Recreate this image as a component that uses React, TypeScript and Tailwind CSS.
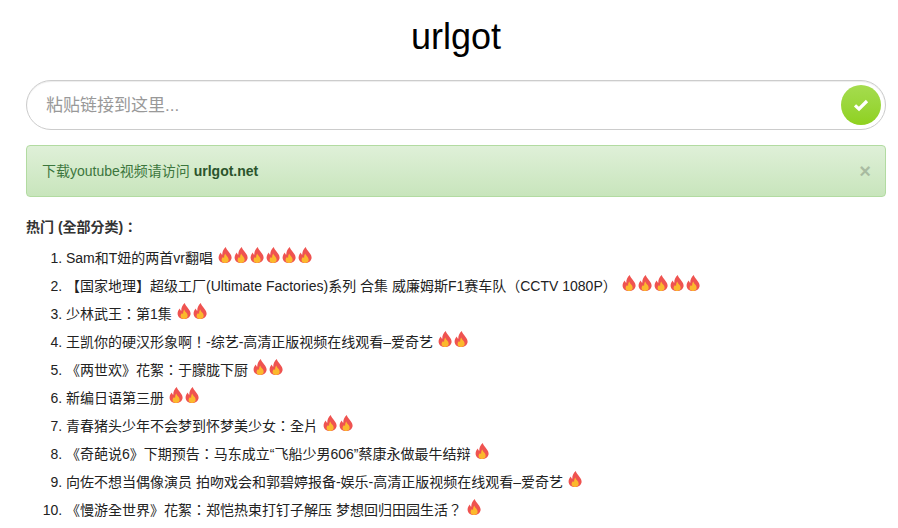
const FONT = "font-['Liberation_Sans','Noto_Sans_CJK_TC','Noto_Sans_CJK_SC',sans-serif]";

function Flame() {
  return (
    <svg viewBox="0 0 16 18" className="inline-block h-[18px] w-4 align-[-1px]">
      <path
        d="M8.8 1C9.2 3.2 10.8 4.6 12.2 6.4 13.8 8.4 14.7 10 14.6 12 14.3 15 11.5 17 8 17 4.5 17 1.8 15 1.6 11.9 1.5 9.6 2.6 7.9 3.9 6.5 4.1 7.7 4.5 8.4 5.3 8.8 5.1 5.8 6.5 2.8 8.8 1Z"
        fill="#ef5350"
      />
      <path
        d="M8.3 7.4C8.6 9 9.7 9.9 10.6 11.1 11.4 12.3 11.8 13.3 11.6 14.4 11.3 16 9.8 16.9 8 16.9 6.2 16.9 4.7 15.9 4.6 14.2 4.5 12.9 5.2 11.8 6.1 11 6.3 11.6 6.6 12 7.1 12.1 7 10.4 7.3 8.7 8.3 7.4Z"
        fill="#fbb92d"
      />
    </svg>
  );
}

const items: [string, number][] = [
  ["Sam和T妞的两首vr翻唱", 6],
  ["【国家地理】超级工厂(Ultimate Factories)系列 合集 威廉姆斯F1赛车队（CCTV 1080P）", 5],
  ["少林武王：第1集", 2],
  ["王凯你的硬汉形象啊！-综艺-高清正版视频在线观看–爱奇艺", 2],
  ["《两世欢》花絮：于朦胧下厨", 2],
  ["新编日语第三册", 2],
  ["青春猪头少年不会梦到怀梦美少女：全片", 2],
  ["《奇葩说6》下期预告：马东成立“飞船少男606”蔡康永做最牛结辩", 1],
  ["向佐不想当偶像演员 拍吻戏会和郭碧婷报备-娱乐-高清正版视频在线观看–爱奇艺", 1],
  ["《慢游全世界》花絮：郑恺热束打钉子解压 梦想回归田园生活？", 1],
];

export default function App() {
  return (
    <div className={`${FONT} h-[528px] w-[898px] overflow-hidden bg-white pr-[12px] pl-[26px] text-[14px] text-[#333]`}>
      <h1 className="pt-[15px] text-center text-[36px] leading-[44px] font-normal text-black">urlgot</h1>
      <div className="mt-[21px] flex h-[50px] items-center justify-between rounded-full border border-[#ccc] pr-[4px] pl-[19px] shadow-[inset_0_1px_1px_rgba(0,0,0,0.075)]">
        <span className="pt-[2px] text-[17px] text-[#999]">粘贴链接到这里...</span>
        <button className="flex h-10 w-10 items-center justify-center rounded-full bg-gradient-to-b from-[#a5dc4e] to-[#8fd11d]">
          <svg viewBox="0 0 20 16" className="h-[14px] w-[16px]">
            <path d="M2.5 8.5 7.5 13 17.5 3" fill="none" stroke="#fff" strokeWidth="4" />
          </svg>
        </button>
      </div>
      <div className="mt-[15px] flex h-[52px] items-center justify-between rounded border border-[#b2dba1] bg-gradient-to-b from-[#dff0d8] to-[#c8e5bc] pr-[14px] pl-[15px] text-[14px] text-[#3c763d]">
        <span>
          下载youtube视频请访问 <b className="text-[#2b542c]">urlgot.net</b>
        </span>
        <span className="text-[20px] leading-none font-bold text-black opacity-20">×</span>
      </div>
      <p className="mt-[21px] text-[14px] leading-[18px] font-bold">热门 (全部分类)：</p>
      <ol className="mt-[8px] list-decimal pl-10 text-[14px] leading-[28px] text-[#222]">
        {items.map(([text, n]) => (
          <li key={text} className="whitespace-nowrap">
            {text}{" "}
            <span className="whitespace-nowrap">
              {Array.from({ length: n }, (_, i) => (
                <Flame key={i} />
              ))}
            </span>
          </li>
        ))}
      </ol>
    </div>
  );
}
